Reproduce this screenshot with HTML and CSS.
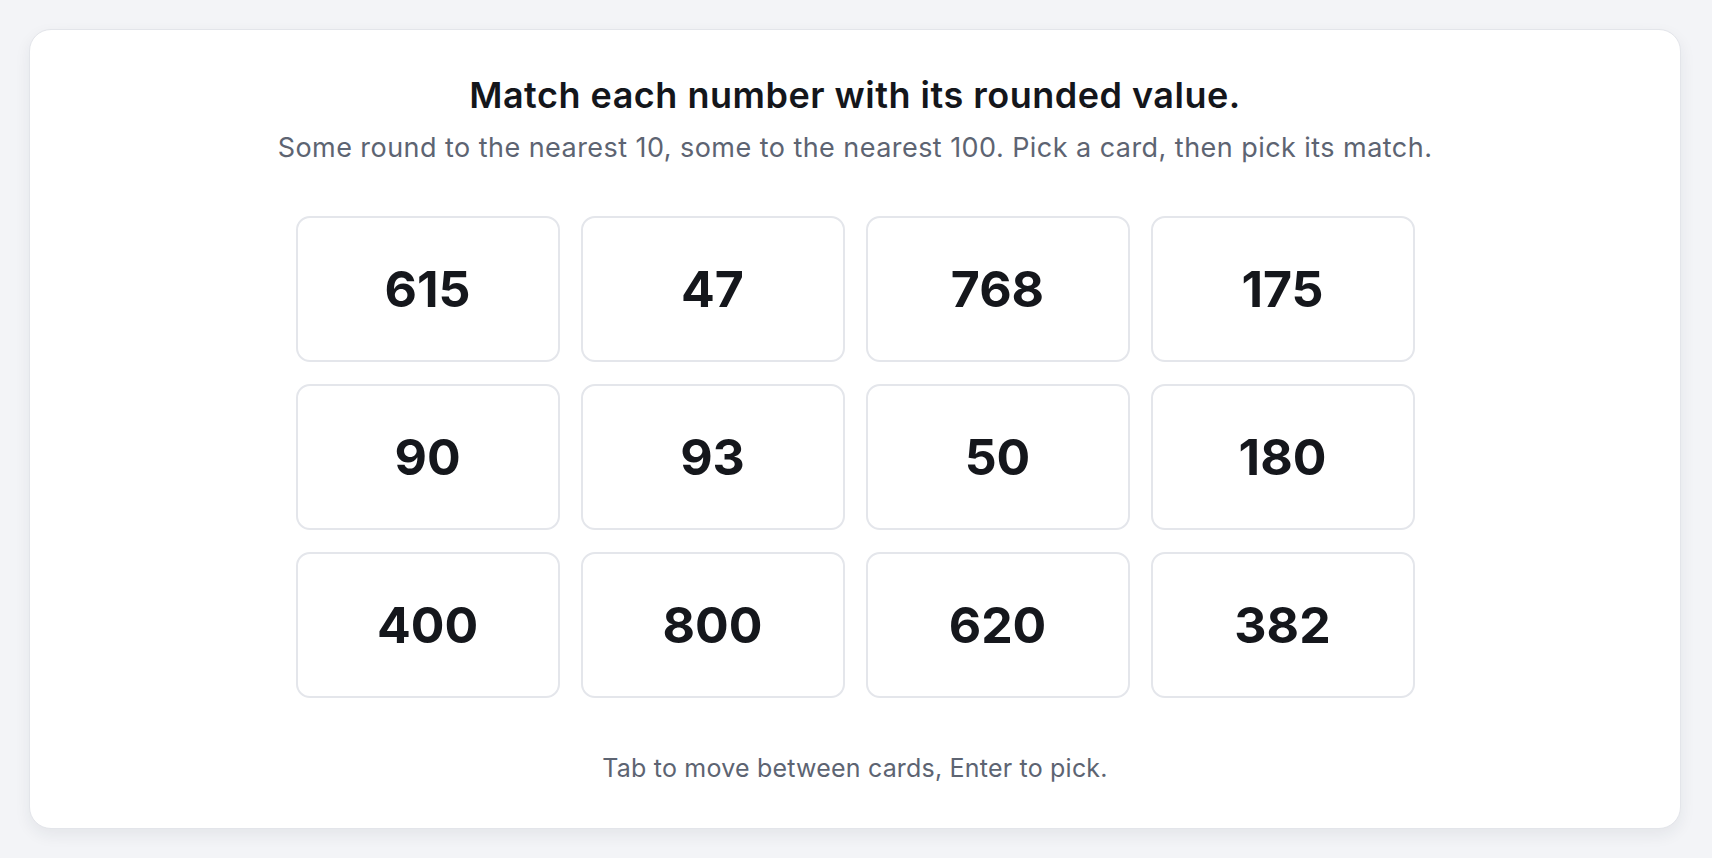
FILE: index.html
```html
<!DOCTYPE html>
<html lang="en">
  <head>
    <meta charset="UTF-8" />
    <meta name="viewport" content="width=device-width, initial-scale=1.0" />
    <title>Rounding Match</title>
    <link rel="stylesheet" href="styles.css">
  </head>
  <body>
    <main class="panel">
      <h1 class="title">Match each number with its rounded value.</h1>
      <p class="subtitle">Some round to the nearest 10, some to the nearest 100. Pick a card, then pick its match.</p>
      <div class="board">
        <button class="tile">615</button>
        <button class="tile">47</button>
        <button class="tile">768</button>
        <button class="tile">175</button>
        <button class="tile">90</button>
        <button class="tile">93</button>
        <button class="tile">50</button>
        <button class="tile">180</button>
        <button class="tile">400</button>
        <button class="tile">800</button>
        <button class="tile">620</button>
        <button class="tile">382</button>
      </div>
      <p class="hint">Tab to move between cards, Enter to pick.</p>
    </main>
  </body>
</html>
```

FILE: styles.css
```css
* {
  margin: 0;
  padding: 0;
  box-sizing: border-box;
}
body {
  background-color: #f3f4f7;
  font-family: Inter, "Noto Sans", sans-serif;
  padding: 29px 31px 30px 29px;
  min-height: 100vh;
}
.panel {
  background: #fff;
  border: 1px solid #e3e5ea;
  border-radius: 22px;
  box-shadow: 0 6px 16px rgba(30, 40, 60, 0.07);
  padding: 44px 40px 43px;
  text-align: center;
}
.title {
  font-size: 36px;
  line-height: 42px;
  font-weight: 600;
  color: #14161b;
  letter-spacing: 0.5px;
}
.subtitle {
  margin-top: 14px;
  font-size: 27px;
  line-height: 36px;
  color: #5d6472;
  letter-spacing: 0.45px;
}
.board {
  margin-top: 50px;
  display: grid;
  grid-template-columns: repeat(4, 264px);
  grid-auto-rows: 146px;
  gap: 22px 21px;
  justify-content: center;
}
.tile {
  background: #fff;
  border: 2px solid #e4e6eb;
  border-radius: 14px;
  font-family: Inter, "Noto Sans", sans-serif;
  font-size: 50px;
  font-weight: 700;
  color: #15171c;
  cursor: pointer;
}
.hint {
  margin-top: 53px;
  font-size: 25px;
  line-height: 34px;
  color: #5d6472;
  letter-spacing: 0.2px;
}
```
